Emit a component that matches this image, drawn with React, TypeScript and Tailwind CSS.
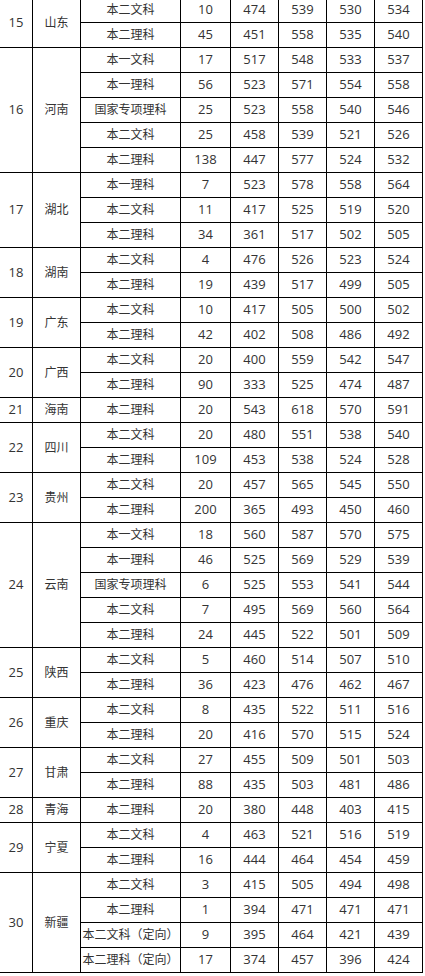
type Row = [string, number, number, number, number, number];
type Group = { no: number; name: string; rows: Row[] };

const groups: Group[] = [
  { no: 15, name: "山东", rows: [
    ["本二文科", 10, 474, 539, 530, 534],
    ["本二理科", 45, 451, 558, 535, 540],
  ] },
  { no: 16, name: "河南", rows: [
    ["本一文科", 17, 517, 548, 533, 537],
    ["本一理科", 56, 523, 571, 554, 558],
    ["国家专项理科", 25, 523, 558, 540, 546],
    ["本二文科", 25, 458, 539, 521, 526],
    ["本二理科", 138, 447, 577, 524, 532],
  ] },
  { no: 17, name: "湖北", rows: [
    ["本一理科", 7, 523, 578, 558, 564],
    ["本二文科", 11, 417, 525, 519, 520],
    ["本二理科", 34, 361, 517, 502, 505],
  ] },
  { no: 18, name: "湖南", rows: [
    ["本二文科", 4, 476, 526, 523, 524],
    ["本二理科", 19, 439, 517, 499, 505],
  ] },
  { no: 19, name: "广东", rows: [
    ["本二文科", 10, 417, 505, 500, 502],
    ["本二理科", 42, 402, 508, 486, 492],
  ] },
  { no: 20, name: "广西", rows: [
    ["本二文科", 20, 400, 559, 542, 547],
    ["本二理科", 90, 333, 525, 474, 487],
  ] },
  { no: 21, name: "海南", rows: [
    ["本二理科", 20, 543, 618, 570, 591],
  ] },
  { no: 22, name: "四川", rows: [
    ["本二文科", 20, 480, 551, 538, 540],
    ["本二理科", 109, 453, 538, 524, 528],
  ] },
  { no: 23, name: "贵州", rows: [
    ["本二文科", 20, 457, 565, 545, 550],
    ["本二理科", 200, 365, 493, 450, 460],
  ] },
  { no: 24, name: "云南", rows: [
    ["本一文科", 18, 560, 587, 570, 575],
    ["本一理科", 46, 525, 569, 529, 539],
    ["国家专项理科", 6, 525, 553, 541, 544],
    ["本二文科", 7, 495, 569, 560, 564],
    ["本二理科", 24, 445, 522, 501, 509],
  ] },
  { no: 25, name: "陕西", rows: [
    ["本二文科", 5, 460, 514, 507, 510],
    ["本二理科", 36, 423, 476, 462, 467],
  ] },
  { no: 26, name: "重庆", rows: [
    ["本二文科", 8, 435, 522, 511, 516],
    ["本二理科", 20, 416, 570, 515, 524],
  ] },
  { no: 27, name: "甘肃", rows: [
    ["本二文科", 27, 455, 509, 501, 503],
    ["本二理科", 88, 435, 503, 481, 486],
  ] },
  { no: 28, name: "青海", rows: [
    ["本二理科", 20, 380, 448, 403, 415],
  ] },
  { no: 29, name: "宁夏", rows: [
    ["本二文科", 4, 463, 521, 516, 519],
    ["本二理科", 16, 444, 464, 454, 459],
  ] },
  { no: 30, name: "新疆", rows: [
    ["本二文科", 3, 415, 505, 494, 498],
    ["本二理科", 1, 394, 471, 471, 471],
    ["本二文科（定向）", 9, 395, 464, 421, 439],
    ["本二理科（定向）", 17, 374, 457, 396, 424],
  ] },
];

const spans: Record<number, string> = {
  1: "row-span-1",
  2: "row-span-2",
  3: "row-span-3",
  4: "row-span-4",
  5: "row-span-5",
};

const cell = "bg-white flex items-center justify-center whitespace-nowrap";

export default function App() {
  return (
    <div className="bg-white min-h-screen overflow-hidden">
      <div
        className="-ml-px mt-[-3px] w-[424px] grid grid-cols-[32px_47px_99px_49px_47px_47px_47px_47px] auto-rows-[24px] gap-px p-px bg-black text-[#333]"
        style={{ fontFamily: '"Open Sans", "Noto Sans CJK SC", sans-serif' }}
      >
        {groups.map((g) => (
          <Group key={g.no} g={g} />
        ))}
      </div>
    </div>
  );
}

function Group({ g }: { g: Group }) {
  const span = spans[g.rows.length];
  return (
    <>
      <div className={`${cell} ${span} text-[13px]`}>{g.no}</div>
      <div className={`${cell} ${span} text-[12px]`}>{g.name}</div>
      {g.rows.map((r, i) => (
        <Line key={i} r={r} />
      ))}
    </>
  );
}

function Line({ r }: { r: Row }) {
  const [kind, ...nums] = r;
  return (
    <>
      <div className={`${cell} col-start-3 text-[12px]`}>{kind}</div>
      {nums.map((n, i) => (
        <div key={i} className={`${cell} text-[13px]`}>
          {n}
        </div>
      ))}
    </>
  );
}
